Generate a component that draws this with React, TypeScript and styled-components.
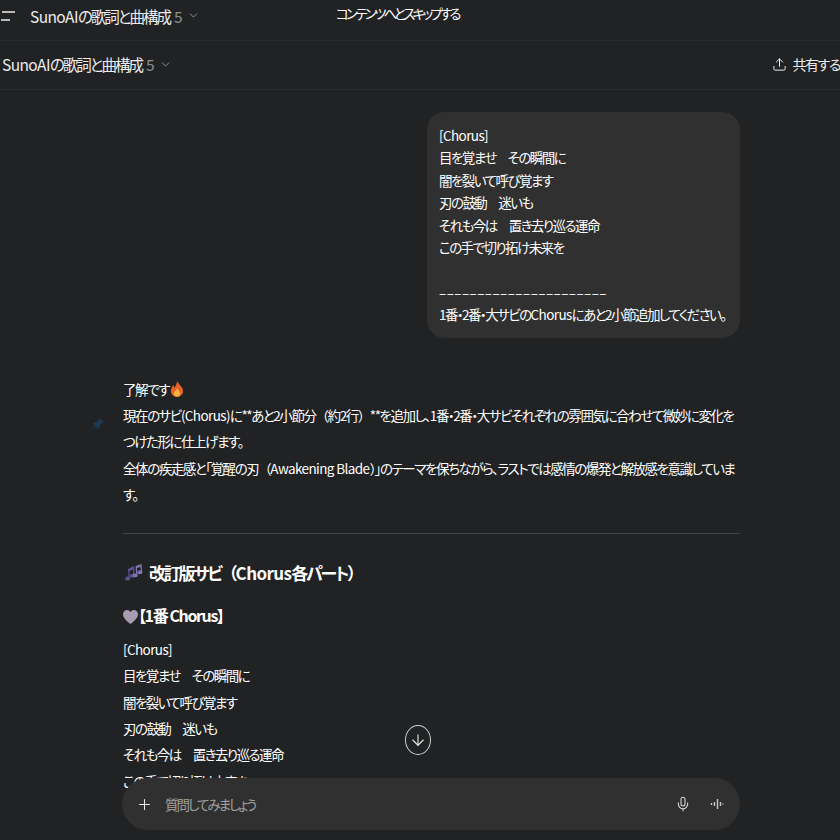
import React from "react";
import styled, { createGlobalStyle } from "styled-components";
import { ArrowDown, ChevronDown, Mic, Plus, Upload } from "lucide-react";

const GlobalStyle = createGlobalStyle`
  html, body {
    margin: 0;
    padding: 0;
    background: #212224;
  }
  * {
    box-sizing: border-box;
  }
`;

function TitleGroup() {
  return (
    <TitleWrap>
      <TitleText>
        <Latin>SunoAI</Latin>の歌詞と曲構成
      </TitleText>
      <TitleCount>5</TitleCount>
      <ChevronDown size={13} color="#a8a8a8" strokeWidth={1.5} />
    </TitleWrap>
  );
}

function FireEmoji() {
  return (
    <Emoji width="14" height="16" viewBox="0 0 14 16">
      <path d="M7 0c1 3 5 5 6 9 .6 4-2.400 7-6 7s-6.600-3-6-7c.3-2 1.500-3 2-5 1 1 1.300 2 1.500 3C5.500 5 7 3 7 0z" fill="#e8622a" />
      <path d="M7.300 7c.6 2 3 3.200 3 5.500 0 2-1.500 3.200-3.300 3.200s-3.300-1.200-3.300-3.200c0-2 2.800-3 3.600-5.500z" fill="#f9b23c" />
    </Emoji>
  );
}

function NotesEmoji() {
  return (
    <HeadingEmoji width="20" height="18" viewBox="0 0 20 18">
      <path d="M5 5l6-3 .8 9.500a2.400 2 0 1 1-1.500-1.600L10 5.400 6.300 7.200l.7 7a2.400 2 0 1 1-1.500-1.500z" fill="#5d5291" />
      <path d="M12.500 2l6-2 .8 8a2.300 1.900 0 1 1-1.500-1.500l-.2-3.600-3.600 1.200.6 7a2.300 1.900 0 1 1-1.500-1.500z" fill="#8075b5" />
    </HeadingEmoji>
  );
}

function HeartEmoji() {
  return (
    <Emoji width="15" height="14" viewBox="0 0 16 15">
      <path d="M8 15C3 11 0 8 0 4.500 0 2 2 0 4.300 0 5.800 0 7.200.8 8 2.200 8.800.8 10.200 0 11.700 0 14 0 16 2 16 4.500 16 8 13 11 8 15z" fill="#a99bb0" />
    </Emoji>
  );
}

function App() {
  return (
    <Page>
      <GlobalStyle />
      <TopBar>
        <MenuGlyph viewBox="0 0 16 12" width="16" height="12">
          <path d="M2 2h13M1 10h9" stroke="#ececec" strokeWidth="1.300" fill="none" />
        </MenuGlyph>
        <TitleGroup />
        <SkipLink>コンテンツへとスキップする</SkipLink>
      </TopBar>
      <HeaderBar>
        <TitleGroup />
        <ShareButton>
          <Upload size={15} strokeWidth={1.6} />
          共有する
        </ShareButton>
      </HeaderBar>
      <Thread>
        <UserBubble>
          <Latin>[Chorus]</Latin>
          <br />
          目を覚ませ　その瞬間に
          <br />
          闇を裂いて呼び覚ます
          <br />
          刃の鼓動　迷いも
          <br />
          それも今は　置き去り巡る運命
          <br />
          この手で切り拓け未来を
          <br />
          <br />
          <DashLine>––––––––––––––––––––––</DashLine>
          <br />
          1番・2番・大サビの<Latin>Chorus</Latin>にあと2小節追加してください。
        </UserBubble>
        <AssistantBody>
          了解です <FireEmoji />
          <br />
          現在のサビ<Latin>(Chorus)</Latin>に**あと2小節分<Paren>（</Paren>約2行<Paren>）</Paren>**を追加し、1番・2番・大サビそれぞれの雰囲気に合わせて微妙に変化を
          <br />
          つけた形に仕上げます。
          <br />
          全体の疾走感と「覚醒の刃<Paren>（</Paren><Latin>Awakening Blade</Latin><Paren>）</Paren>」のテーマを保ちながら、ラストでは感情の爆発と解放感を意識していま
          <br />
          す。
        </AssistantBody>
        <Divider />
        <SectionHeading>
          <NotesEmoji />改訂版サビ<Paren>（</Paren><Latin>Chorus</Latin>各パート<Paren>）</Paren>
        </SectionHeading>
        <PartHeading>
          <HeartEmoji />【1番 Chorus】
        </PartHeading>
        <Lyrics>
          <Latin>[Chorus]</Latin>
          <br />
          目を覚ませ　その瞬間に
          <br />
          闇を裂いて呼び覚ます
          <br />
          刃の鼓動　迷いも
          <br />
          それも今は　置き去り巡る運命
          <br />
          この手で切り拓け未来を
        </Lyrics>
      </Thread>
      <PinMark viewBox="0 0 16 16" width="14" height="14">
        <path d="M10 1l5 5-2 .6-3 3-.4 3L8 14 5.500 10.500 1.500 14.500 1 14l4-4L2 8l1.400-1.600 3-.4 3-3z" fill="#1f3a56" />
      </PinMark>
      <ScrollButton>
        <ArrowDown size={18} strokeWidth={1.5} />
      </ScrollButton>
      <Composer>
        <Plus size={17} strokeWidth={1.5} color="#ececec" />
        <Placeholder>質問してみましょう</Placeholder>
        <Mic size={16} strokeWidth={1.6} color="#d8d8d8" />
        <WaveGlyph viewBox="0 0 14 14" width="14" height="14">
          <path d="M1.500 6v2M4.500 5v4M7.500 2v10M10.500 5v4M13 6.500v1" stroke="#c8c8c8" strokeWidth="1.400" fill="none" />
        </WaveGlyph>
      </Composer>
    </Page>
  );
}

export default App;

const fontStack = `"Noto Sans CJK JP", "Noto Sans", sans-serif`;

const Page = styled.div`
  position: relative;
  width: 840px;
  height: 840px;
  overflow: hidden;
  display: flex;
  flex-direction: column;
  background: #212224;
  color: #ffffff;
  font-family: ${fontStack};
  font-feature-settings: "palt";
`;

const TopBar = styled.header`
  position: relative;
  flex: 0 0 41px;
  display: flex;
  align-items: center;
  gap: 14px;
  padding-bottom: 9px;
  border-bottom: 1px solid #2c2d2f;
`;

const MenuGlyph = styled.svg`
  flex-shrink: 0;
  margin-top: 1px;
`;

const SkipLink = styled.a`
  position: absolute;
  left: 336px;
  top: 3px;
  font-size: 13.5px;
  line-height: 20px;
  letter-spacing: -2.75px;
  color: #ffffff;
`;

const HeaderBar = styled.div`
  flex: 0 0 49px;
  display: flex;
  align-items: center;
  justify-content: space-between;
  padding: 0 0 2px 2px;
  border-bottom: 1px solid #2c2d2f;
`;

const TitleWrap = styled.div`
  display: flex;
  align-items: center;
  gap: 4px;
  font-size: 15.5px;
  line-height: 22px;
`;

const TitleText = styled.span`
  letter-spacing: -2px;
  color: #ececec;
`;

const Latin = styled.span`
  letter-spacing: -0.6px;
`;

const TitleCount = styled.span`
  color: #8e8e8e;
`;

const ShareButton = styled.div`
  display: flex;
  align-items: center;
  gap: 5px;
  font-size: 14px;
  letter-spacing: -1.4px;
  white-space: nowrap;
  color: #ececec;
`;

const Thread = styled.main`
  flex: 1;
  display: flex;
  flex-direction: column;
  padding: 22px 100px 0 123px;
  overflow: hidden;
  font-size: 13.5px;
`;

const UserBubble = styled.div`
  align-self: flex-end;
  width: 313px;
  padding: 12px;
  border-radius: 18px;
  background: #303030;
  line-height: 22.4px;
  letter-spacing: -1.55px;
  white-space: nowrap;
`;

const DashLine = styled.span`
  letter-spacing: 0.4px;
  font-feature-settings: "palt" 0;
`;

const Paren = styled.span`
  font-feature-settings: "palt" 0;
`;

const AssistantBody = styled.div`
  margin-top: 38px;
  line-height: 26.3px;
  letter-spacing: -1.45px;
  white-space: nowrap;
`;

const Divider = styled.hr`
  width: 100%;
  margin: 26px 0 0;
  border: none;
  border-top: 1px solid #434343;
`;

const SectionHeading = styled.h3`
  margin: 25px 0 0;
  font-size: 17px;
  line-height: 28px;
  font-weight: 700;
  letter-spacing: -2.2px;
`;

const PartHeading = styled.h4`
  margin: 16px 0 0;
  font-size: 16px;
  line-height: 24px;
  font-weight: 700;
  letter-spacing: -1.4px;
`;

const Lyrics = styled.p`
  margin: 9px 0 0;
  line-height: 26.3px;
  letter-spacing: -1.55px;
  white-space: nowrap;
`;

const Emoji = styled.svg`
  vertical-align: -2px;
`;

const HeadingEmoji = styled(Emoji)`
  margin-right: 6px;
`;

const PinMark = styled.svg`
  position: absolute;
  left: 91px;
  top: 417px;
`;

const ScrollButton = styled.button`
  position: absolute;
  left: 405px;
  top: 725px;
  width: 26px;
  height: 30px;
  padding: 0;
  display: flex;
  align-items: center;
  justify-content: center;
  border: 1px solid #d0d0d0;
  border-radius: 50%;
  background: #212224;
  color: #e6e6e6;
`;

const Composer = styled.div`
  position: absolute;
  left: 122px;
  top: 778px;
  width: 618px;
  height: 52px;
  display: flex;
  align-items: center;
  padding: 0 16px 0 14px;
  border-radius: 26px;
  background: #303030;
`;

const Placeholder = styled.span`
  flex: 1;
  margin-left: 12px;
  font-size: 13.5px;
  letter-spacing: -2px;
  color: #a0a0a0;
`;

const WaveGlyph = styled.svg`
  margin-left: 19px;
`;
